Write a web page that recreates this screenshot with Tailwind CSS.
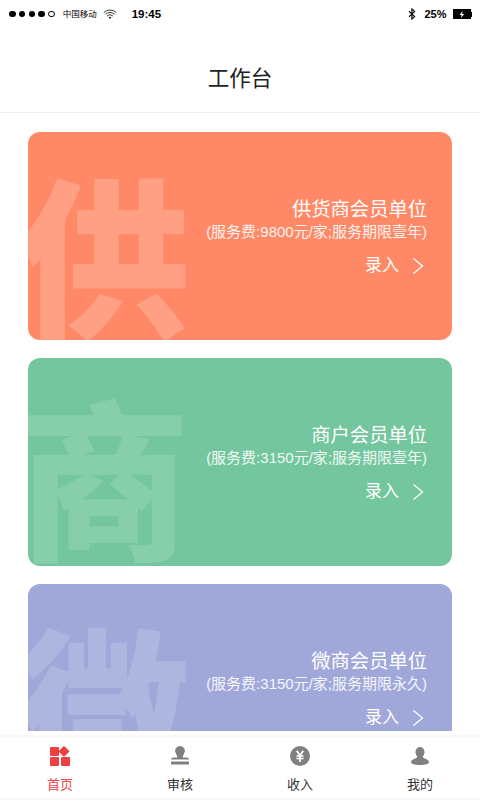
<!DOCTYPE html>
<html lang="zh"><head><meta charset="utf-8"><script src="https://cdn.jsdelivr.net/npm/@tailwindcss/browser@4"></script></head>
<body class="m-0 bg-white">
<div class="w-[480px] h-[800px] flex flex-col overflow-hidden bg-white font-['Noto_Sans_CJK_SC','Noto_Sans',sans-serif]">
  <div class="h-[28px] shrink-0 flex items-center pl-[9px] pr-[8px] text-black">
    <div class="flex items-center gap-[3.300px]">
      <span class="w-[6.500px] h-[6.500px] rounded-full bg-black"></span><span class="w-[6.500px] h-[6.500px] rounded-full bg-black"></span><span class="w-[6.500px] h-[6.500px] rounded-full bg-black"></span><span class="w-[6.500px] h-[6.500px] rounded-full bg-black"></span><span class="w-[6.500px] h-[6.500px] rounded-full border border-black"></span>
    </div>
    <span class="ml-[8px] mb-[1px] text-[8.500px] leading-none">中国移动</span>
    <svg class="ml-[6px]" width="14" height="11" viewBox="0 0 14 11" fill="none" stroke="#222" stroke-width="0.9"><path d="M.7 3.6a9 9 0 0 1 12.6 0M2.400 5.300a6.600 6.600 0 0 1 9.200 0M4.100 7a4.200 4.200 0 0 1 5.800 0"/><path d="M5.600 8.500a2 2 0 0 1 2.800 0L7 10z" fill="#222" stroke="none"/></svg>
    <span class="ml-[15px] pt-[2px] text-[11.500px] leading-none font-bold font-['Liberation_Sans']">19:45</span>
    <div class="ml-auto flex items-center">
      <svg width="8" height="12" viewBox="0 0 8 12" fill="none" stroke="#111" stroke-width="1.2"><path d="M1 3.200 6.600 8.400 3.900 11V1l2.700 2.600L1 8.800"/></svg>
      <span class="ml-[8px] text-[11px] leading-none font-bold font-['Liberation_Sans']">25%</span>
      <div class="ml-[6px] flex items-center">
        <div class="w-[18px] h-[10px] bg-black flex items-center justify-center">
          <svg width="6" height="7" viewBox="0 0 6 7"><path d="M3.600 0 .6 3.900h2L2 7l3.200-4.100h-2z" fill="#fff"/></svg>
        </div>
        <div class="w-[1.500px] h-[5px] bg-black"></div>
      </div>
    </div>
  </div>
  <header class="h-[85px] shrink-0 flex items-center justify-center border-b border-[#efefef] text-[21.500px] text-[#222] leading-none pt-[14px]">工作台</header>
  <main class="flex-1 min-h-0 mb-[4px] overflow-hidden px-[28px] pt-[19px] flex flex-col gap-[18px]">
    <section class="relative shrink-0 h-[208px] rounded-[12px] overflow-hidden bg-[#ff8866] text-white">
      <span class="absolute left-[-10px] top-[32px] text-[172px] leading-none font-black text-white/20">供</span>
      <div class="relative h-full flex flex-col items-end pt-[66px] pr-[25px] font-['Liberation_Sans','Noto_Sans_CJK_SC',sans-serif]">
        <div class="text-[19.300px] leading-[24px]">供货商会员单位</div>
        <div class="text-[15px] leading-[22px] text-white/90 mt-[-1px]">(服务费:9800元/家;服务期限壹年)</div>
        <div class="mt-[11px] flex items-center gap-[13px] pr-[3px] text-[17px] leading-[24px]">录入
          <svg class="mt-[-1px]" width="12" height="18" viewBox="0 0 12 18" fill="none" stroke="#fff" stroke-width="1.3"><path d="M1.500 1.500 10.500 9l-9 7.500"/></svg>
        </div>
      </div>
    </section>
    <section class="relative shrink-0 h-[208px] rounded-[12px] overflow-hidden bg-[#73c69d] text-white">
      <span class="absolute left-[-10px] top-[28px] text-[172px] leading-none font-black text-white/15">商</span>
      <div class="relative h-full flex flex-col items-end pt-[66px] pr-[25px] font-['Liberation_Sans','Noto_Sans_CJK_SC',sans-serif]">
        <div class="text-[19.300px] leading-[24px]">商户会员单位</div>
        <div class="text-[15px] leading-[22px] text-white/90 mt-[-1px]">(服务费:3150元/家;服务期限壹年)</div>
        <div class="mt-[11px] flex items-center gap-[13px] pr-[3px] text-[17px] leading-[24px]">录入
          <svg class="mt-[-1px]" width="12" height="18" viewBox="0 0 12 18" fill="none" stroke="#fff" stroke-width="1.3"><path d="M1.500 1.500 10.500 9l-9 7.500"/></svg>
        </div>
      </div>
    </section>
    <section class="relative shrink-0 h-[208px] rounded-[12px] overflow-hidden bg-[#a0a8da] text-white">
      <span class="absolute left-[-10px] top-[30px] text-[172px] leading-none font-black text-white/15">微</span>
      <div class="relative h-full flex flex-col items-end pt-[66px] pr-[25px] font-['Liberation_Sans','Noto_Sans_CJK_SC',sans-serif]">
        <div class="text-[19.300px] leading-[24px]">微商会员单位</div>
        <div class="text-[15px] leading-[22px] text-white/90 mt-[-1px]">(服务费:3150元/家;服务期限永久)</div>
        <div class="mt-[11px] flex items-center gap-[13px] pr-[3px] text-[17px] leading-[24px]">录入
          <svg class="mt-[-1px]" width="12" height="18" viewBox="0 0 12 18" fill="none" stroke="#fff" stroke-width="1.3"><path d="M1.500 1.500 10.500 9l-9 7.500"/></svg>
        </div>
      </div>
    </section>
  </main>
  <nav class="h-[65px] shrink-0 grid grid-cols-4 bg-white border-t-[2px] border-b-[2px] border-[#f8f8f8] text-[13px] leading-[16px] text-[#333]">
    <div class="flex flex-col items-center pt-[9px] text-[#e8434a]">
      <svg width="20" height="20" viewBox="0 0 20 20" fill="#ee4044"><rect x="0" y="1" width="9" height="9" rx="1"/><rect x="10" y="1.400" width="8" height="8" rx="1" transform="rotate(45 14 5.400)"/><rect x="0" y="11" width="9" height="9" rx="1"/><rect x="11" y="11" width="9" height="9" rx="1"/></svg>
      <span class="mt-[10px]">首页</span>
    </div>
    <div class="flex flex-col items-center pt-[9px]">
      <svg width="20" height="20" viewBox="0 0 20 20" fill="#808080"><path d="M10 0a5 5 0 0 1 4 8c-1 1.300-1.500 2-1 3.500h3.500c2 0 2.500 1.500 2.500 2H1c0-.5.5-2 2.500-2H7c.5-1.500 0-2.200-1-3.500a5 5 0 0 1 4-8z"/><rect x="1" y="15.500" width="18" height="3"/></svg>
      <span class="mt-[10px]">审核</span>
    </div>
    <div class="flex flex-col items-center pt-[9px]">
      <svg width="20" height="20" viewBox="0 0 20 20"><circle cx="10" cy="10" r="10" fill="#808080"/><path d="M6.800 4.800 10 9.500l3.200-4.700M6.500 10h7M6.500 12.500h7M10 9.500V16" fill="none" stroke="#fff" stroke-width="1.700"/></svg>
      <span class="mt-[10px]">收入</span>
    </div>
    <div class="flex flex-col items-center pt-[9px]">
      <svg width="18" height="20" viewBox="0 0 20 20" fill="#808080"><path d="M10 0c3 0 5 2.300 5 5.500 0 2.200-1 4-2 5 0 1 .5 1.500 2.500 2.200 2.500.9 4.500 2 4.500 4.300 0 1.800-4 3-10 3s-10-1.200-10-3c0-2.300 2-3.400 4.500-4.300C6.500 12 7 11.500 7 10.500c-1-1-2-2.800-2-5C5 2.300 7 0 10 0z"/></svg>
      <span class="mt-[10px]">我的</span>
    </div>
  </nav>
</div>
</body></html>
